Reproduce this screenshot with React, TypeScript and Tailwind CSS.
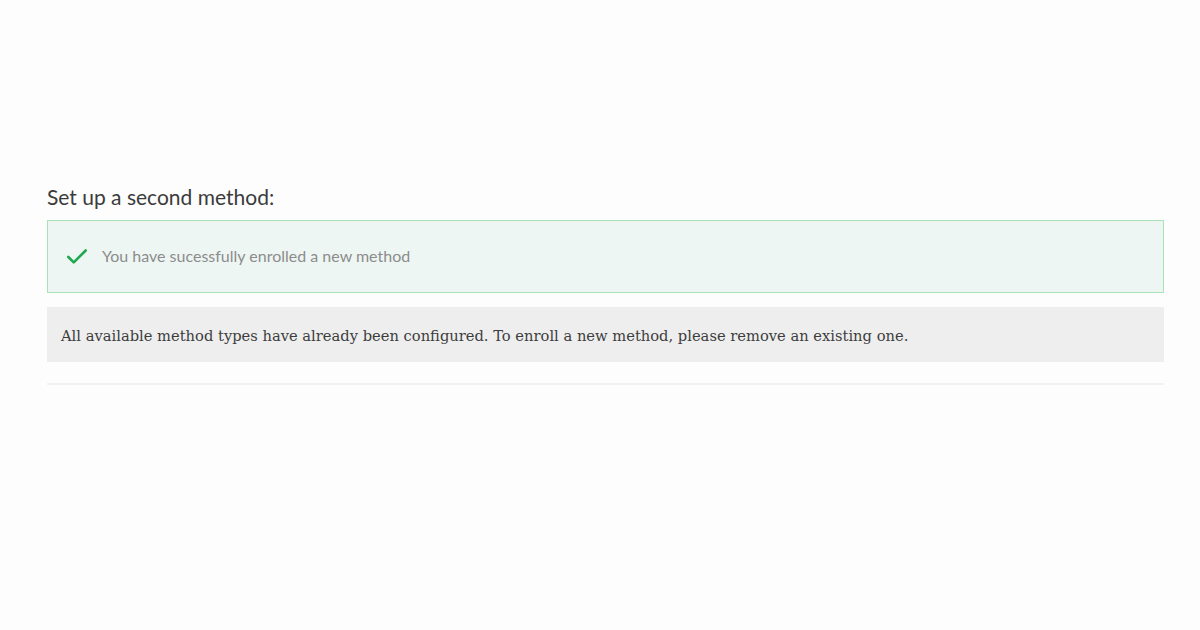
import { Check } from "lucide-react";

export default function App() {
  return (
    <div className="min-h-[630px] w-full bg-[#fdfdfd] pl-[47px] pr-[36px] pt-[182px]">
      <h2 className="font-['Lato',sans-serif] text-[21px] leading-[29px] text-[#3b3b3b]">
        Set up a second method:
      </h2>

      <div className="mt-[9px] flex h-[73px] items-center gap-[12px] border border-[#a9e3b8] bg-[#eef6f3] px-[16px]">
        <Check className="h-[26px] w-[26px] text-[#1fa84f]" strokeWidth={2.4} />
        <span className="pb-[1px] font-['Lato',sans-serif] text-[16px] text-[#8c8c8c]">
          You have sucessfully enrolled a new method
        </span>
      </div>

      <div className="mt-[14px] flex h-[55px] items-center bg-[#eeeeee] px-[14px] pt-[3px]">
        <p className="font-['DejaVu_Serif',serif] text-[14.7px] text-[#3d3d3d]">
          All available method types have already been configured. To enroll a new method, please remove an existing one.
        </p>
      </div>

      <div className="mt-[21px] h-[2px] bg-[#f2f2f2]" />
    </div>
  );
}
